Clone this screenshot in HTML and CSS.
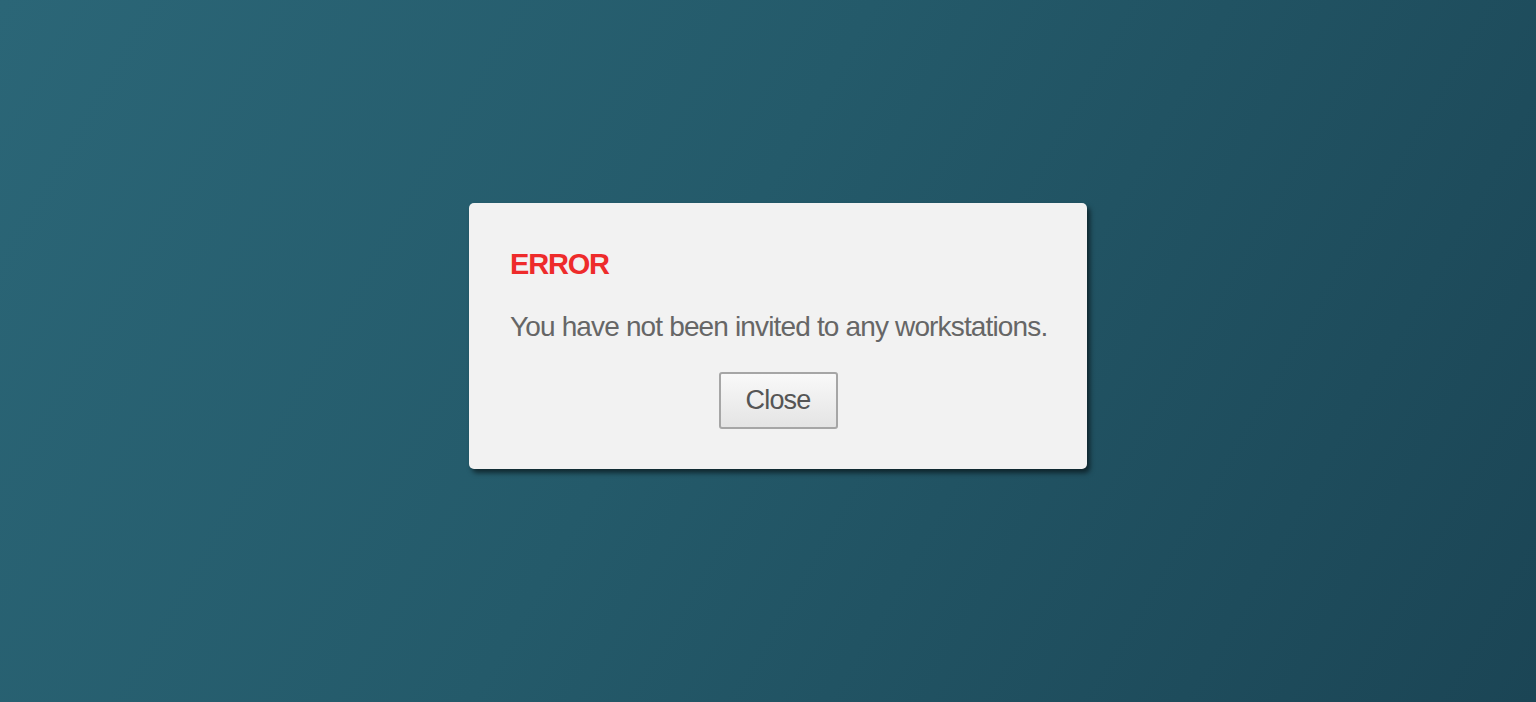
FILE: index.html
```html
<!DOCTYPE html>
<html lang="en">
<head>
  <meta charset="UTF-8">
  <meta name="viewport" content="width=device-width, initial-scale=1">
  <title>Error</title>
  <link rel="stylesheet" href="styles.css">
</head>
<body>

  <div class="overlay">
    <div class="dialog">
      <h2 class="dialog-title">ERROR</h2>
      <p class="dialog-msg">You have not been invited to any workstations.</p>
      <div class="dialog-actions">
        <button class="btn">Close</button>
      </div>
    </div>
  </div>

</body>
</html>
```

FILE: styles.css
```css
* { margin:0; padding:0; box-sizing:border-box; }
html, body { height:100%; }
body {
  font-family:'Liberation Sans', Arial, sans-serif;
  background:linear-gradient(120deg, #2b6677 0%, #245a6a 45%, #1b4555 100%);
  color:#666;
}
.overlay {
  height:100%;
  display:flex; justify-content:center; align-items:center;
  padding:0 0 30px 20px;
}
.dialog {
  width:618px; height:266px;
  background:#f2f2f2; border-radius:5px;
  padding:43px 30px 0 41px;
  box-shadow:3px 4px 5px rgba(0,0,0,0.55);
}
.dialog-title {
  font-size:29px; line-height:36px; font-weight:bold;
  letter-spacing:-1.2px;
  color:#ee2b2b;
}
.dialog-msg {
  margin-top:29px;
  font-size:28px; line-height:32px;
  letter-spacing:-0.85px; white-space:nowrap;
  color:#666;
}
.dialog-actions {
  display:flex; justify-content:center;
  margin-top:29px;
  padding-right:11px;
}
.btn {
  width:119px; height:57px;
  border:2px solid #a6a6a6; border-radius:3px;
  background:linear-gradient(#f9f9f9, #e4e4e4);
  font-family:inherit; letter-spacing:-0.8px;
  font-size:27px; color:#555;
  cursor:pointer;
}
```
